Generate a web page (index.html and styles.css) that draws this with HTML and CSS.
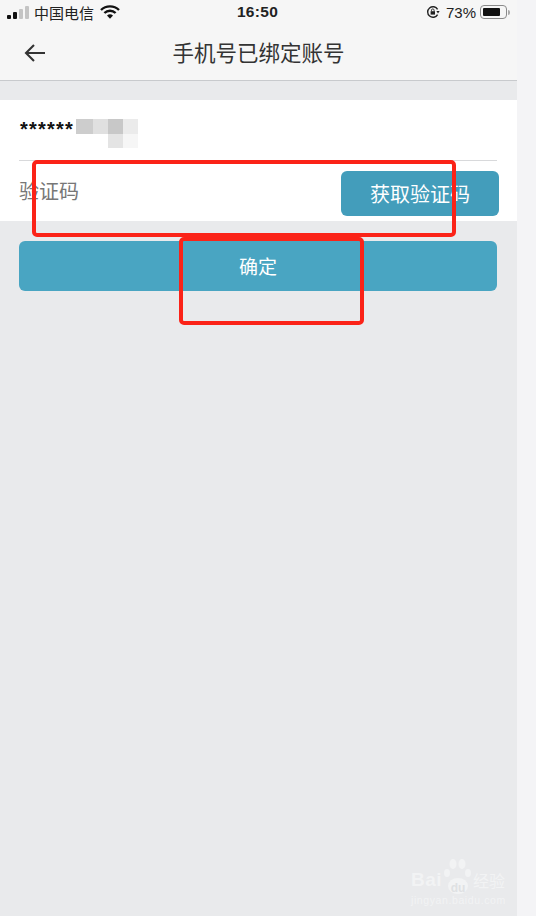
FILE: index.html
```html
<!DOCTYPE html>
<html lang="zh">
<head>
    <meta charset="UTF-8">
    <meta name="viewport" content="width=device-width, initial-scale=1.0">
    <title>手机号已绑定账号</title>
    <link rel="stylesheet" href="styles.css">
</head>
<body>
    <div class="phone">
        <!-- status bar and title -->
        <header class="top">
            <div class="status">
                <div class="status-left">
                    <span class="signal"><i class="on s1"></i><i class="on s2"></i><i class="s3"></i><i class="s4"></i></span>
                    <span class="carrier">中国电信</span>
                    <svg class="wifi" width="20" height="14" viewBox="0 0 20 14">
                        <path d="M1 5 A13 13 0 0 1 19 5" fill="none" stroke="#111" stroke-width="2.4"/>
                        <path d="M4.4 8 A8 8 0 0 1 15.6 8" fill="none" stroke="#111" stroke-width="2.4"/>
                        <path d="M7 10.6 A4.4 4.4 0 0 1 13 10.6 L10 13.8 Z" fill="#111"/>
                    </svg>
                </div>
                <div class="clock">16:50</div>
                <div class="status-right">
                    <svg class="lock" width="14" height="14" viewBox="0 0 14 14">
                        <path d="M11.6 4.4 A5.3 5.3 0 1 0 11.6 9.6" fill="none" stroke="#222" stroke-width="1.4"/>
                        <path d="M10.4 6 L13.6 6 L12 8.4 Z" fill="#222"/>
                        <rect x="4.6" y="6.2" width="4.4" height="3.4" fill="#222"/>
                        <path d="M5.5 6.2 V5.2 A1.3 1.3 0 0 1 8.1 5.2 V6.2" fill="none" stroke="#222" stroke-width="0.9"/>
                    </svg>
                    <span class="percent">73%</span>
                    <span class="battery"><span class="battery-level"></span></span>
                    <span class="battery-tip"></span>
                </div>
            </div>
            <div class="nav">
                <svg class="back" width="24" height="20" viewBox="0 0 24 20">
                    <path d="M22 10 H3 M11 2 L3 10 L11 18" fill="none" stroke="#333" stroke-width="2.1"/>
                </svg>
                <h1 class="title">手机号已绑定账号</h1>
            </div>
        </header>

        <!-- form -->
        <section class="form">
            <div class="row-account">
                <span class="account">******</span>
                <span class="mosaic">
                    <i class="m1"></i><i class="m2"></i><i class="m3"></i><i class="m4"></i>
                    <i></i><i></i><i class="m5"></i><i class="m6"></i>
                </span>
            </div>
            <div class="row-code">
                <span class="code-label">验证码</span>
                <button class="btn-code">获取验证码</button>
            </div>
        </section>

        <div class="actions">
            <button class="btn-ok">确定</button>
        </div>
    </div>
    <div class="side"></div>

    <!-- red marks over the screenshot -->
    <div class="mark mark-code"></div>
    <div class="mark mark-ok"></div>

    <div class="watermark">
        <svg class="paw" width="28" height="36" viewBox="0 0 28 36">
            <ellipse cx="4" cy="14" rx="3" ry="4" fill="#f2f3f4"/>
            <ellipse cx="10" cy="5" rx="3.5" ry="5" fill="#f2f3f4"/>
            <ellipse cx="19" cy="5" rx="3.5" ry="5" fill="#f2f3f4"/>
            <ellipse cx="25" cy="14" rx="3" ry="4" fill="#f2f3f4"/>
            <ellipse cx="15" cy="27" rx="10" ry="8" fill="#f2f3f4"/>
        </svg>
        <div class="wm-main"><span class="wm-bai">Bai</span><span class="wm-du">du</span><span class="wm-cn">经验</span></div>
        <div class="wm-url">jingyan.baidu.com</div>
    </div>
</body>
</html>
```

FILE: styles.css
```css
* {
    box-sizing: border-box;
}

body {
    margin: 0;
    width: 536px;
    height: 916px;
    display: flex;
    position: relative;
    overflow: hidden;
    background-color: #f4f4f6;
    font-family: "Liberation Sans", "Noto Sans CJK SC", sans-serif;
}

.phone {
    width: 517px;
    height: 916px;
    background-color: #e9eaec;
}

.side {
    flex: 1;
    background-color: #f4f4f6;
}

/* top bar */
.top {
    height: 81px;
    background-color: #f6f6f6;
    border-bottom: 1px solid #c8cacd;
}

.status {
    height: 24px;
    padding: 0 7px;
    display: flex;
    align-items: center;
    justify-content: space-between;
    color: #222;
    font-size: 15px;
}

.status-left {
    width: 198px;
    display: flex;
    align-items: center;
}

.status-right {
    width: 200px;
    display: flex;
    align-items: center;
    justify-content: flex-end;
}

.signal {
    display: flex;
    align-items: flex-end;
    gap: 2px;
    height: 13px;
}

.signal i {
    width: 4px;
    background-color: #c4c4c4;
    border-radius: 1px;
}

.signal .on {
    background-color: #111;
}

.s1 { height: 4px; }
.s2 { height: 7px; }
.s3 { height: 10px; }
.s4 { height: 13px; }

.carrier {
    margin-left: 5px;
}

.wifi {
    margin-left: 6px;
}

.clock {
    font-size: 15.5px;
    font-weight: bold;
    color: #222;
    letter-spacing: 0.3px;
}

.percent {
    margin-left: 6px;
    font-size: 15px;
}

.battery {
    width: 27px;
    height: 14px;
    margin-left: 4px;
    padding: 2px;
    border: 1px solid #8a8a8a;
    border-radius: 4px;
}

.battery-level {
    display: block;
    width: 17px;
    height: 8px;
    background-color: #111;
    border-radius: 1px;
}

.battery-tip {
    width: 2px;
    height: 5px;
    margin-left: 1px;
    background-color: #aaa;
    border-radius: 0 2px 2px 0;
}

.nav {
    height: 56px;
    position: relative;
    display: flex;
    align-items: center;
    justify-content: center;
}

.back {
    position: absolute;
    left: 23px;
    top: 19px;
}

.title {
    margin: 0 0 1px;
    font-size: 21.5px;
    font-weight: normal;
    color: #333;
}

/* form */
.form {
    margin-top: 19px;
    height: 121px;
    background-color: #fff;
}

.row-account {
    height: 61px;
    margin: 0 20px 0 19px;
    display: flex;
    border-bottom: 1px solid #d8d9db;
}

.account {
    width: 57px;
    margin-top: 19px;
    padding-left: 1px;
    font-size: 20px;
    font-weight: bold;
    line-height: 20px;
    color: #111;
    letter-spacing: 1.2px;
}

.mosaic {
    width: 62px;
    height: 29px;
    margin-top: 19px;
    display: grid;
    grid-template-columns: 17px 15px 15px 15px;
    grid-template-rows: 15px 14px;
}

.m1 { background-color: #cdcdcd; }
.m2 { background-color: #e0e0e0; }
.m3 { background-color: #c8c8c8; }
.m4 { background-color: #ebebeb; }
.m5 { background-color: #e4e4e4; }
.m6 { background-color: #f6f6f6; }

.row-code {
    height: 60px;
    padding: 10px 18px 0 19px;
    display: flex;
    justify-content: space-between;
}

.code-label {
    margin-top: 8px;
    font-size: 20px;
    line-height: 26px;
    color: #777;
}

.btn-code {
    width: 158px;
    height: 45px;
    border: none;
    border-radius: 6px;
    background-color: #439dbb;
    color: #fff;
    font-family: inherit;
    font-size: 20px;
}

.actions {
    padding: 20px 20px 0 19px;
}

.btn-ok {
    display: block;
    width: 100%;
    height: 50px;
    padding-bottom: 3px;
    border: none;
    border-radius: 6px;
    background-color: #49a5c2;
    color: #fff;
    font-family: inherit;
    font-size: 19px;
}

/* annotations */
.mark {
    position: absolute;
    border: 4px solid #fb2318;
    border-radius: 5px;
}

.mark-code {
    left: 32px;
    top: 160px;
    width: 424px;
    height: 77px;
}

.mark-ok {
    left: 179px;
    top: 237px;
    width: 185px;
    height: 88px;
}

/* watermark */
.watermark {
    position: absolute;
    left: 411px;
    top: 858px;
    width: 96px;
    height: 52px;
    color: #f2f3f4;
}

.paw {
    position: absolute;
    left: 32px;
    top: 1px;
}

.wm-main {
    position: absolute;
    left: 0;
    top: 10px;
    display: flex;
    align-items: center;
    white-space: nowrap;
}

.wm-bai {
    font-size: 19px;
    font-weight: bold;
    letter-spacing: 0.5px;
}

.wm-du {
    width: 22px;
    margin-left: 5px;
    position: relative;
    top: 8px;
    font-size: 12px;
    font-weight: bold;
    color: #dfe1e3;
    text-align: center;
}

.wm-cn {
    margin-left: 4px;
    font-size: 16px;
}

.wm-url {
    position: absolute;
    left: 0;
    top: 36px;
    font-size: 10.5px;
    letter-spacing: 0.6px;
    white-space: nowrap;
}
```
